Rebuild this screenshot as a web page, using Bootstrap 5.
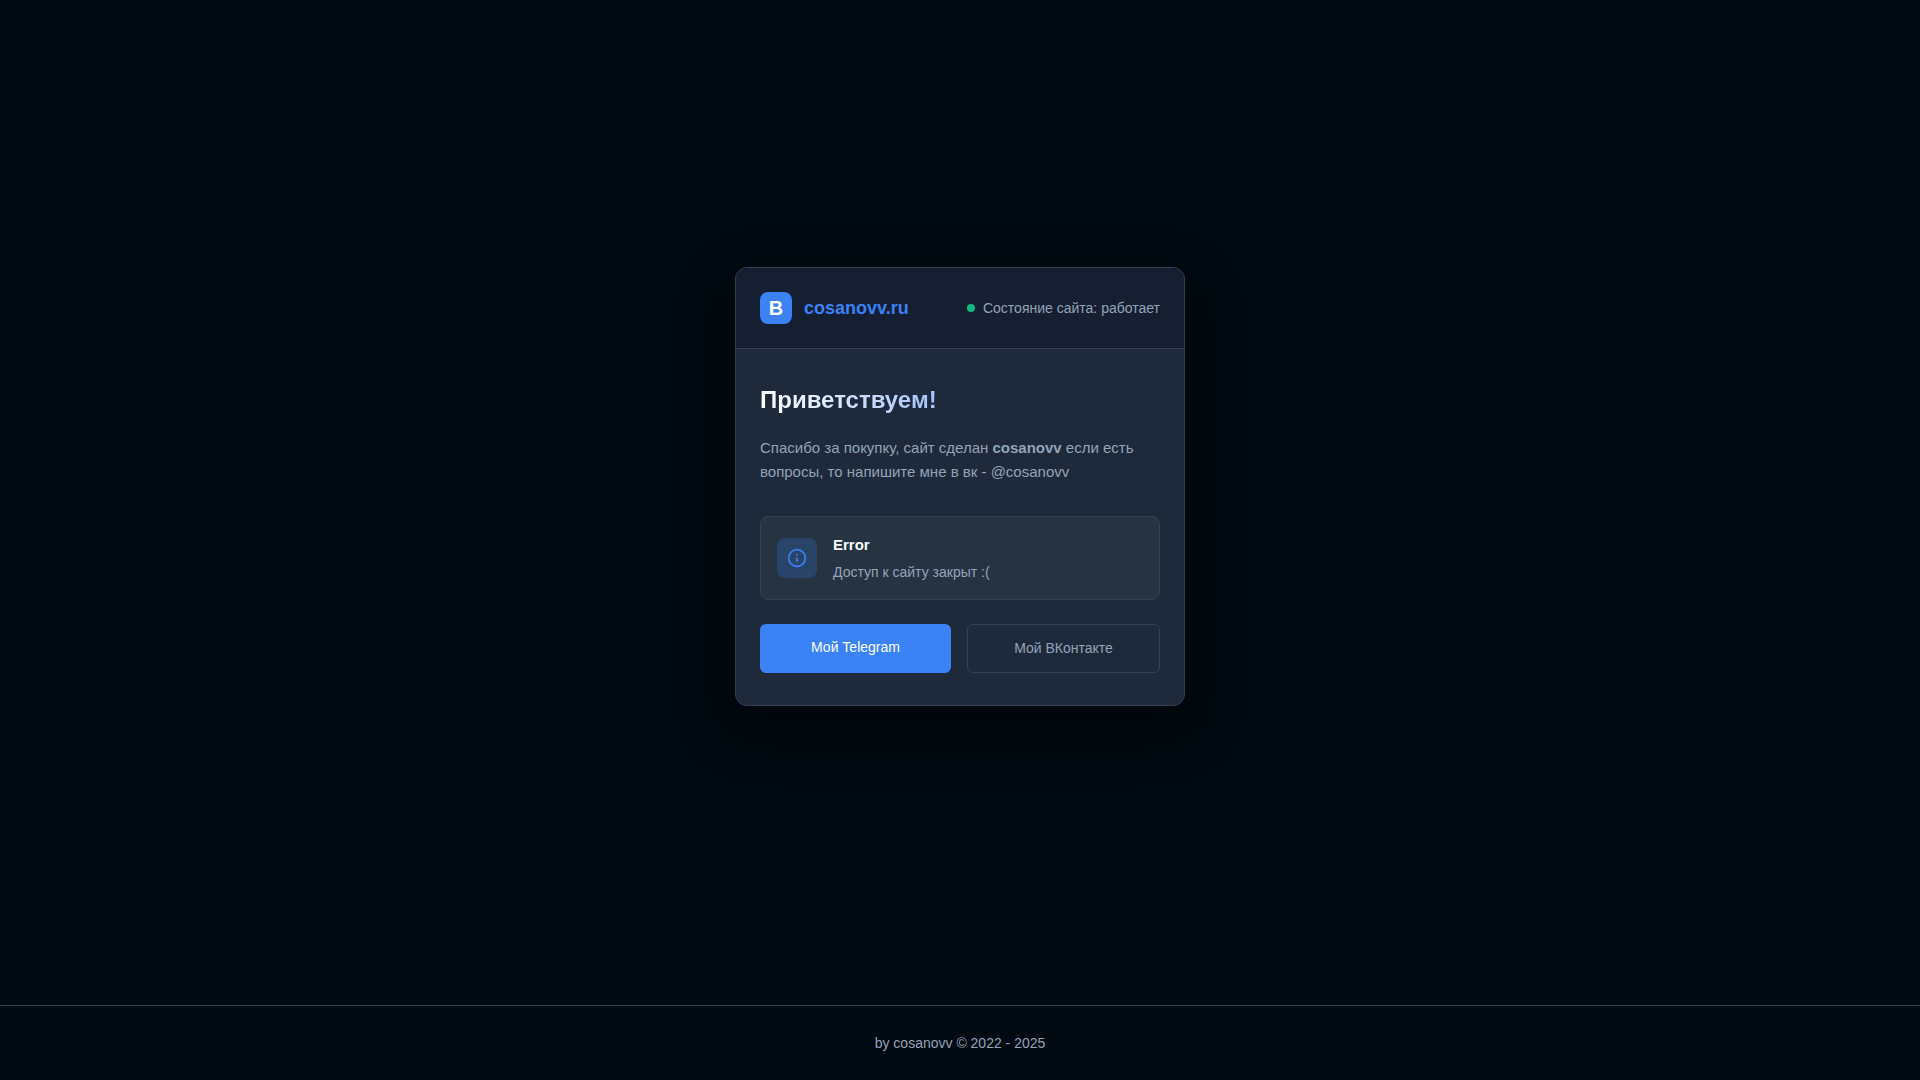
<!DOCTYPE html>
<html lang="ru">
<head>
<meta charset="utf-8">
<meta name="viewport" content="width=device-width, initial-scale=1">
<title>cosanovv.ru</title>
<link rel="stylesheet" href="https://cdn.jsdelivr.net/npm/bootstrap@5.3.0/dist/css/bootstrap.min.css">
<style>
  :root { --line: #334155; --muted: #94a3b8; --accent: #3b82f6; }
  body { background: #010a10; color: #f8fafc; font-family: "Liberation Sans", Arial, sans-serif; }
  .site-main { padding: 32px 16px 64px; }
  .panel { max-width: 450px; background: #1e293b; border: 1px solid var(--line); border-radius: 12px; overflow: hidden; box-shadow: 0 20px 60px rgba(0, 0, 0, .4); }
  .panel-head { padding: 24px; background: #161f31; border-bottom: 1px solid var(--line); }
  .brand { gap: 12px; color: var(--accent); font-size: 18px; line-height: 24px; font-weight: 700; }
  .brand:hover { color: var(--accent); }
  .brand-mark { width: 32px; height: 32px; border-radius: 8px; background: var(--accent); color: #fff; font-size: 20px; }
  .status { font-size: 14px; line-height: 22px; color: var(--muted); }
  .status-dot { width: 8px; height: 8px; background: #10b981; }
  .panel-body { padding: 32px 24px; }
  .hello { width: fit-content; margin-bottom: 18px; font-size: 24px; line-height: 37px; font-weight: 700; background: linear-gradient(90deg, #fff, #a5c4fb); -webkit-background-clip: text; background-clip: text; color: transparent; }
  .intro { margin-bottom: 32px; font-size: 15px; line-height: 24px; color: var(--muted); }
  .notice { gap: 16px; padding: 16px; margin-bottom: 24px; background: #263343; border: 1px solid var(--line); border-radius: 8px; }
  .notice-icon { width: 40px; height: 40px; border-radius: 8px; background: #2a4368; color: var(--accent); }
  .notice-title { margin-bottom: 4px; font-size: 15px; line-height: 24px; font-weight: 700; }
  .notice-text { font-size: 14px; line-height: 22px; color: var(--muted); }
  .action { flex: 1 1 0; padding: 12px 24px; border-radius: 6px; font-size: 14px; line-height: 23px; text-align: center; text-decoration: none; }
  .action-main { background: var(--accent); color: #fff; }
  .action-line { border: 1px solid var(--line); color: var(--muted); }
  .site-foot { padding: 26px 16px; border-top: 1px solid var(--line); font-size: 14px; line-height: 22px; color: var(--muted); }
</style>
<script src="https://cdn.jsdelivr.net/npm/bootstrap@5.3.0/dist/js/bootstrap.bundle.min.js" defer></script>
</head>
<body class="d-flex flex-column min-vh-100">
<main class="site-main flex-grow-1 d-flex align-items-center justify-content-center">
  <section class="panel w-100">
    <header class="panel-head d-flex align-items-center justify-content-between">
      <a class="brand d-flex align-items-center text-decoration-none" href="#"><span class="brand-mark d-flex align-items-center justify-content-center">B</span><span>cosanovv.ru</span></a>
      <div class="status d-flex align-items-center gap-2"><span class="status-dot rounded-circle"></span><span>Состояние сайта: работает</span></div>
    </header>
    <div class="panel-body">
      <h1 class="hello">Приветствуем!</h1>
      <p class="intro">Спасибо за покупку, сайт сделан <strong>cosanovv</strong> если есть вопросы, то напишите мне в вк - @cosanovv</p>
      <div class="notice d-flex align-items-center">
        <div class="notice-icon flex-shrink-0 d-flex align-items-center justify-content-center">
          <svg width="20" height="20" viewBox="0 0 24 24" fill="none" stroke="currentColor" stroke-width="2" stroke-linecap="round" stroke-linejoin="round" aria-hidden="true"><circle cx="12" cy="12" r="10"/><path d="M12 16v-4M12 8h.01"/></svg>
        </div>
        <div>
          <h2 class="notice-title">Error</h2>
          <p class="notice-text mb-0">Доступ к сайту закрыт :(</p>
        </div>
      </div>
      <div class="d-flex gap-3">
        <a class="action action-main" href="#">Мой Telegram</a>
        <a class="action action-line" href="#">Мой ВКонтакте</a>
      </div>
    </div>
  </section>
</main>
<footer class="site-foot text-center">by cosanovv © 2022 - 2025</footer>
</body>
</html>
